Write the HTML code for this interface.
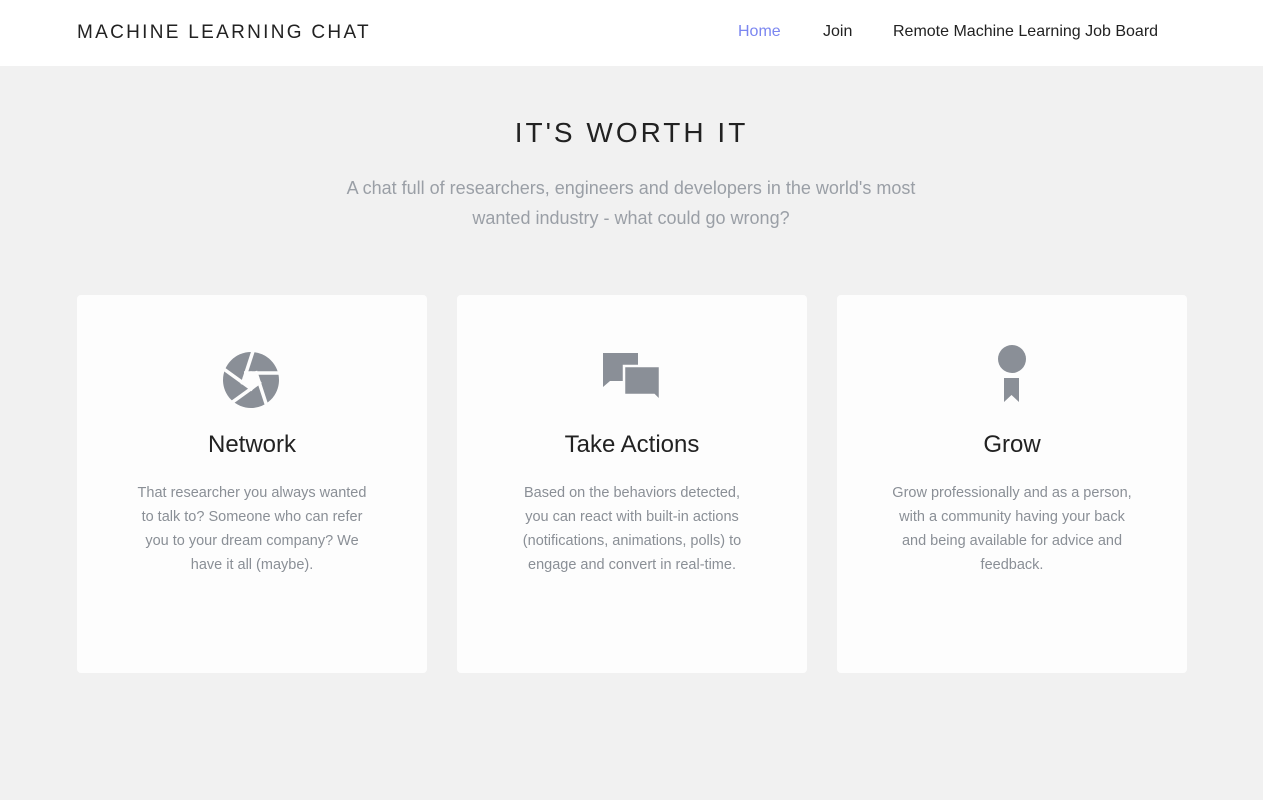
<!DOCTYPE html>
<html><head><style>
body{margin:0;background:#f1f1f1;font-family:"Liberation Sans",sans-serif;width:1263px;height:800px;overflow:hidden}
.hd{height:66px;background:#fff;position:relative}
.logo{position:absolute;left:77px;top:22px;font-size:19px;letter-spacing:2.3px;color:#222}
.nav{position:absolute;top:23px;font-size:16px;color:#222}
h1{position:absolute;top:117px;left:0;width:1263px;text-align:center;margin:0;font-weight:normal;font-size:28px;letter-spacing:3px;color:#222}
.sub{position:absolute;top:173px;left:331px;width:600px;text-align:center;font-size:18px;line-height:30px;color:#9a9fa6}
.card{position:absolute;top:295px;width:350px;height:378px;background:#fdfdfd;border-radius:4px;text-align:center}
.card svg{position:absolute;left:145px;top:48px}
.card h2{position:absolute;top:136px;width:100%;margin:0;font-weight:normal;font-size:24px;color:#222}
.card p{position:absolute;top:186px;left:55px;width:240px;margin:0;font-size:14.5px;line-height:24px;color:#8a8f96}
</style></head><body>
<div class="hd"><div class="logo">MACHINE LEARNING CHAT</div>
<div class="nav" style="left:738px;color:#7b86f0">Home</div>
<div class="nav" style="left:823px">Join</div>
<div class="nav" style="left:893px">Remote Machine Learning Job Board</div></div>
<h1>IT'S WORTH IT</h1>
<div class="sub">A chat full of researchers, engineers and developers in the world's most wanted industry - what could go wrong?</div>
<div class="card" style="left:77px"><svg width="60" height="70" viewBox="0 0 60 70"><circle cx="29" cy="37" r="28" fill="#8a8f97"/><polygon points="29,28 37.3,34 34.1,43.9 23.9,43.9 20.7,34" fill="#fdfdfd"/><g stroke="#fdfdfd" stroke-width="3.5"><line x1="22" y1="30" x2="60" y2="30"/><line x1="33.5" y1="28.2" x2="45.5" y2="65"/><line x1="38.8" y1="38.6" x2="7" y2="61.6"/><line x1="30.6" y1="46.8" x2="-1" y2="24"/><line x1="20.2" y1="41.5" x2="32.2" y2="4.5"/></g></svg><h2>Network</h2><p>That researcher you always wanted to talk to? Someone who can refer you to your dream company? We have it all (maybe).</p></div>
<div class="card" style="left:457px"><svg width="60" height="70" viewBox="0 0 60 70"><path d="M1 10H36V24H22V38H8L1 44Z" fill="#8a8f97"/><path d="M22 23H58V58L52 52H22Z" fill="#8a8f97" stroke="#fdfdfd" stroke-width="2.5"/></svg><h2>Take Actions</h2><p>Based on the behaviors detected, you can react with built-in actions (notifications, animations, polls) to engage and convert in real-time.</p></div>
<div class="card" style="left:837px"><svg width="60" height="70" viewBox="0 0 60 70"><circle cx="30" cy="16" r="14" fill="#8a8f97"/><path d="M22 35H37V59L29.5 52L22 59Z" fill="#8a8f97"/></svg><h2>Grow</h2><p>Grow professionally and as a person, with a community having your back and being available for advice and feedback.</p></div>
</body></html>
